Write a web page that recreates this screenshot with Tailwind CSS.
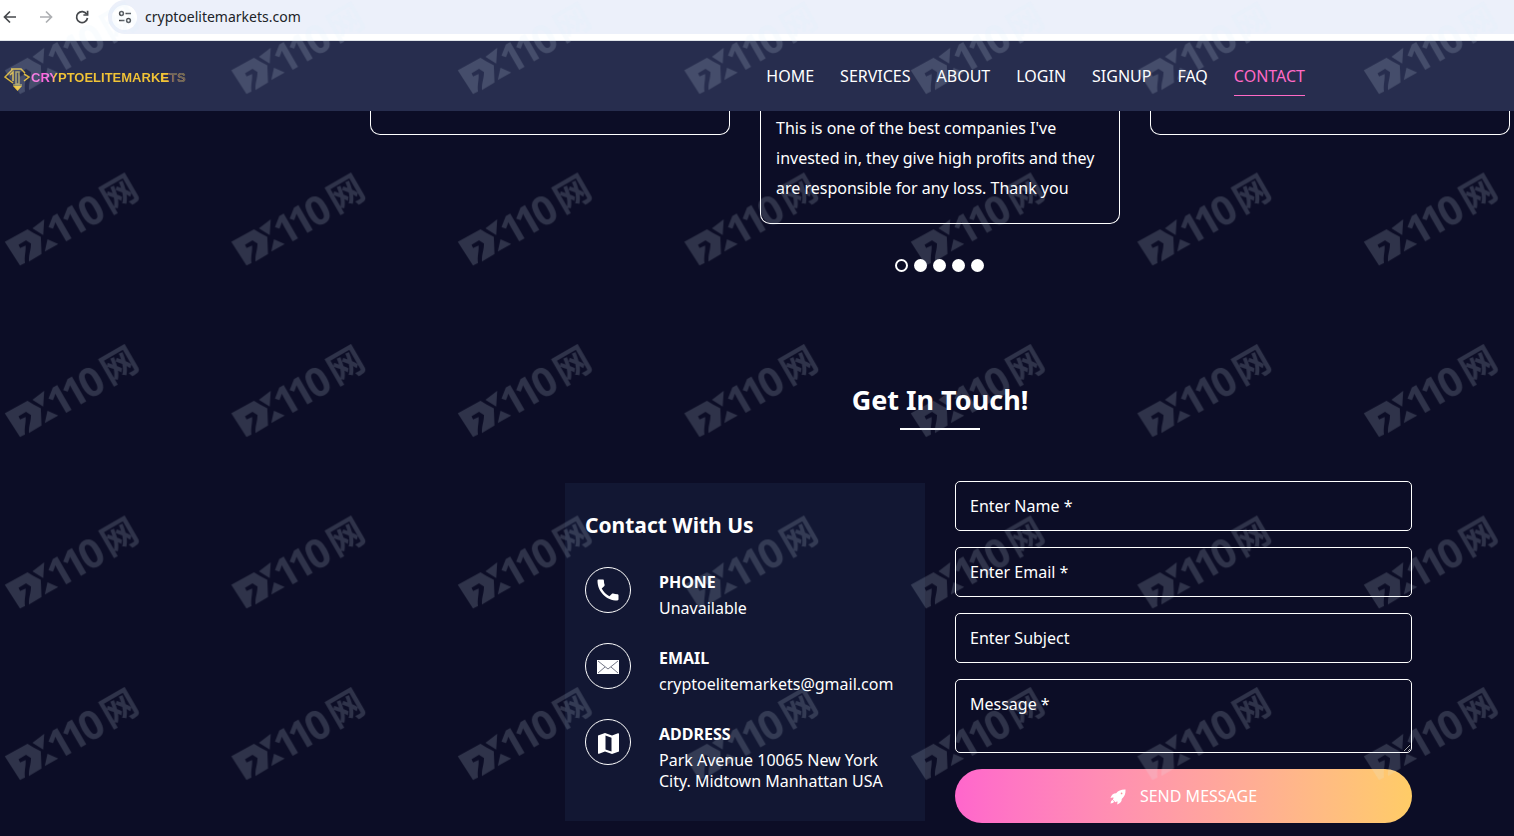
<!DOCTYPE html>
<html lang="en">
<head>
<meta charset="utf-8">
<meta name="viewport" content="width=device-width, initial-scale=1">
<title>cryptoelitemarkets.com</title>
<script src="https://cdn.jsdelivr.net/npm/@tailwindcss/browser@4"></script>
</head>
<body class="relative h-screen overflow-hidden bg-[#0c0d26] font-['Noto_Sans','Noto_Sans_CJK_SC',sans-serif] text-base text-white">

<!-- browser toolbar -->
<div class="flex h-[41px] items-start border-b border-[#dfe3e8] bg-white text-[#45484c]">
  <div class="flex h-[34px] w-[108px] shrink-0 items-center gap-5 pl-0.5">
    <button aria-label="Back" class="size-4"><svg viewBox="0 0 16 16" class="size-4" fill="none" stroke="currentColor" stroke-width="1.7"><path d="M14 8H3M8 2.5 2.5 8 8 13.500"/></svg></button>
    <button aria-label="Forward" class="size-4 text-[#adafb2]"><svg viewBox="0 0 16 16" class="size-4" fill="none" stroke="currentColor" stroke-width="1.700"><path d="M2 8h11M8 2.500 13.500 8 8 13.500"/></svg></button>
    <button aria-label="Reload" class="size-4"><svg viewBox="0 0 16 16" class="size-4" fill="none" stroke="currentColor" stroke-width="1.700"><path d="M12.800 5.200A5.500 5.500 0 1 0 13.500 9"/><path d="M13.600 1.800V6H9.400"/></svg></button>
  </div>
  <div class="flex h-[34px] grow items-center gap-2 rounded-l-full bg-[#ecf0fa] pl-1">
    <button aria-label="Site information" class="flex size-[25px] items-center justify-center rounded-full bg-white"><svg viewBox="0 0 14 14" class="size-3.5" fill="none" stroke="currentColor" stroke-width="1.500"><circle cx="3.500" cy="3.500" r="1.900"/><path d="M7.500 3.500H13M1 10.500h5.500"/><circle cx="10.500" cy="10.500" r="1.900"/></svg></button>
    <span class="text-sm text-[#202327]">cryptoelitemarkets.com</span>
  </div>
</div>

<!-- site header -->
<header class="flex h-[70px] items-center justify-between bg-[#272d4e] pr-[209px] pl-1">
  <a href="#" class="flex items-center gap-px pt-1">
    <svg viewBox="0 0 26 26" class="size-[26px]" fill="none" stroke="#d9b53c" stroke-width="1.500"><path d="M9 4 1 12l8 6M7 4h10l4 4M6 10l3-3v9M20 9l5 3-5 4"/><path d="M12 7h3v12h-3zM9 20h9" stroke="#a59a5a"/><path d="M9 21h9l-4.500 5z" fill="#eec234" stroke="none"/></svg>
    <span class="bg-linear-100 from-[#ff66df] from-15% via-[#f1c336] via-16% to-[#f1c336] to-85% bg-clip-text font-['Liberation_Sans_Narrow','Liberation_Sans',sans-serif] text-[13px] leading-6 font-bold text-transparent">CRYPTOELITEMARK<span class="text-[#f1c336]">E</span><span class="text-[#6a6260]">TS</span></span>
  </a>
  <nav class="flex items-start gap-[26px] pt-1 leading-6">
    <a href="#" class="pt-1 pb-[7px]">HOME</a>
    <a href="#" class="pt-1 pb-[7px]">SERVICES</a>
    <a href="#" class="pt-1 pb-[7px]">ABOUT</a>
    <a href="#" class="pt-1 pb-[7px]">LOGIN</a>
    <a href="#" class="pt-1 pb-[7px]">SIGNUP</a>
    <a href="#" class="pt-1 pb-[7px]">FAQ</a>
    <a href="#" class="border-b border-[#ff69c5] pt-1 pb-[7px] text-[#ff69c5]">CONTACT</a>
  </nav>
</header>

<main>
  <!-- testimonials -->
  <section>
    <div class="grid grid-cols-3 items-start gap-[30px] pr-1 pl-[370px]">
      <article class="h-6 rounded-b-[10px] border border-t-0 border-white"></article>
      <article class="rounded-b-[10px] border border-t-0 border-white px-[15px] pt-0.5 pb-5 leading-[30px]">This is one of the best companies I've<br>invested in, they give high profits and they<br>are responsible for any loss. Thank you</article>
      <article class="h-6 rounded-b-[10px] border border-t-0 border-white"></article>
    </div>
    <div class="flex justify-center gap-1.5 pt-[35px] pl-[364px]">
      <button aria-label="Slide 1" class="size-[13px] rounded-full border-2 border-white"></button>
      <button aria-label="Slide 2" class="size-[13px] rounded-full bg-white"></button>
      <button aria-label="Slide 3" class="size-[13px] rounded-full bg-white"></button>
      <button aria-label="Slide 4" class="size-[13px] rounded-full bg-white"></button>
      <button aria-label="Slide 5" class="size-[13px] rounded-full bg-white"></button>
    </div>
  </section>

  <!-- contact -->
  <section class="pt-[108px]">
    <div class="flex flex-col items-center pl-[366px]">
      <h2 class="text-[27px] leading-10 font-bold">Get In Touch!</h2>
      <div class="mt-2 h-0.5 w-20 bg-white"></div>
    </div>
    <div class="flex items-start gap-[30px] pt-[51px] pr-[102px] pl-[565px]">
      <div class="mt-0.5 w-[360px] shrink-0 bg-[#121733] px-5 pt-7 pb-[29px]">
        <h3 class="text-[21px] leading-7 font-bold">Contact With Us</h3>
        <ul class="mt-7 flex flex-col gap-[25px]">
          <li class="flex gap-7">
            <span class="flex size-[46px] shrink-0 items-center justify-center rounded-full border border-white"><svg viewBox="0 0 24 24" class="size-7" fill="currentColor"><path d="M6.600 10.800c1.400 2.800 3.800 5.100 6.600 6.600l2.200-2.200c.3-.3.700-.4 1-.2 1.100.4 2.300.6 3.600.6.600 0 1 .4 1 1V20c0 .6-.4 1-1 1C10.600 21 3 13.400 3 4c0-.6.400-1 1-1h3.500c.6 0 1 .4 1 1 0 1.300.2 2.500.6 3.600.1.300 0 .7-.2 1z"/></svg></span>
            <div class="pt-[3px]"><h4 class="leading-6 font-bold">PHONE</h4><p class="pt-1 leading-5">Unavailable</p></div>
          </li>
          <li class="flex gap-7">
            <span class="flex size-[46px] shrink-0 items-center justify-center rounded-full border border-white pt-0.5"><svg viewBox="0 0 22 14" class="h-3.5 w-[22px]" fill="currentColor"><path d="M0 0h22v14H0z"/><path d="m1 1 10 8L21 1M1 13l7-6m13 6-7-6" fill="none" stroke="#131733" stroke-width=".6"/></svg></span>
            <div class="pt-[3px]"><h4 class="leading-6 font-bold">EMAIL</h4><p class="pt-1 leading-5">cryptoelitemarkets@gmail.com</p></div>
          </li>
          <li class="flex gap-7">
            <span class="flex size-[46px] shrink-0 items-center justify-center rounded-full border border-white pt-0.5"><svg viewBox="0 0 21 21" class="size-[21px]" fill="currentColor"><path fill-rule="evenodd" d="M0 2.500 7 0l7 2.500L20 .2q1-.3 1 .8v17.500L14 21l-7-2.500-6 2.300q-1 .3-1-.8zM7.500 2.600v13.800l6 2.100V4.700z"/></svg></span>
            <div class="pt-[3px]"><h4 class="leading-6 font-bold">ADDRESS</h4><p class="pt-1 leading-[21px]">Park Avenue 10065 New York<br>City. Midtown Manhattan USA</p></div>
          </li>
        </ul>
      </div>
      <form class="flex grow flex-col gap-4">
        <input aria-label="Name" placeholder="Enter Name *" class="h-[50px] rounded-[5px] border border-white bg-transparent px-3.5 placeholder:text-white">
        <input aria-label="Email" type="email" placeholder="Enter Email *" class="h-[50px] rounded-[5px] border border-white bg-transparent px-3.5 placeholder:text-white">
        <input aria-label="Subject" placeholder="Enter Subject" class="h-[50px] rounded-[5px] border border-white bg-transparent px-3.5 placeholder:text-white">
        <textarea aria-label="Message" placeholder="Message *" class="h-[74px] rounded-[5px] border border-white bg-transparent px-3.5 py-3 placeholder:text-white"></textarea>
        <button type="submit" class="flex h-[54px] items-center justify-center gap-3.5 rounded-full bg-linear-to-r from-[#ff66cc] to-[#ffcc66]"><svg viewBox="0 0 17 17" class="mt-0.5 size-4" fill="currentColor"><path d="M16.500.5C12 .3 9 1.500 6.500 4.500 3.500 4.500 2 6 .5 9.500q2-.7 3.500-.3l-1 2 2.800 2.800 2-1q.5 1.500-.3 3.500c3.500-1.500 5-3 5-6 3-2.500 4.200-5.500 4-10z"/><path d="M2.500 11.500Q.8 12.500.5 15.500q3-.3 4-2z"/><circle cx="12.300" cy="4.700" r=".9" fill="#ff929b"/></svg>SEND MESSAGE</button>
      </form>
    </div>
  </section>
</main>

<!-- repeating brand watermark -->
<svg class="pointer-events-none absolute inset-0 size-full" aria-hidden="true">
  <defs>
    <pattern id="mark" width="226.500" height="171.500" patternUnits="userSpaceOnUse">
      <g fill="#dcebf6" fill-opacity=".17">
        <path fill-rule="evenodd" d="M4.800 70.200 27.500 57.800l5.700 3.400 7.600 4 .7 17.300-12.500 7.500c-.5-7 2-11 2-18l-5-3.200-7.500 4.500 1.600 3.200 5.500-2.500c.5 6-1.600 11-.6 17.500l-5 2.500z"/>
        <path d="M32.500 56.800 44.200 47.800 43.200 63.500zM47.500 67.800l10.700 4.700-13.400 7.500z"/>
        <g transform="translate(20 96.500) rotate(-30)" font-weight="700">
          <text x="43 60 79" y="0" font-family="Open Sans" font-size="40">110</text>
          <text x="105" y="-2" font-family="Noto Sans CJK SC" font-size="36">网</text>
        </g>
      </g>
    </pattern>
  </defs>
  <rect width="100%" height="100%" fill="url(#mark)"/>
</svg>
</body>
</html>
